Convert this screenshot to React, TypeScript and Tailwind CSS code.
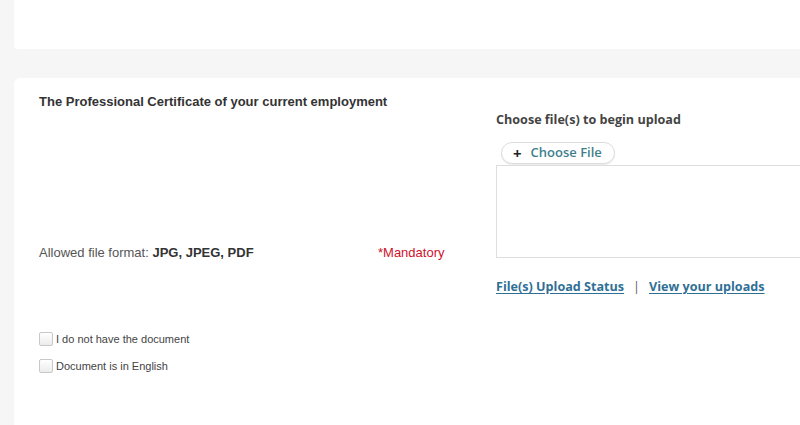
export default function App() {
  return (
    <div className="h-[425px] w-[800px] overflow-hidden bg-[#f6f6f6] pl-[14px] font-['Liberation_Sans',Arial,sans-serif]">
      {/* top card */}
      <div className="h-[49px] rounded-bl-[4px] bg-white" />

      {/* upload card */}
      <div className="mt-[29px] h-[400px] overflow-hidden rounded-tl-[6px] bg-white pl-[25px]">
        <div className="flex">
          <div className="w-[457px] shrink-0">
            <div className="pt-[16px] text-[13px] font-bold leading-[16px] text-[#333]">
              The Professional Certificate of your current employment
            </div>
            <div className="mt-[135px] flex text-[13px] leading-[16px] text-[#555]">
              <div className="w-[339px]">
                Allowed file format: <span className="font-bold text-[#333]">JPG, JPEG, PDF</span>
              </div>
              <div className="text-[#d0112b]">*Mandatory</div>
            </div>
          </div>

          <div className="shrink-0 pt-[34px] font-['Open_Sans',sans-serif]">
            <div className="text-[12.6px] font-bold leading-[16px] text-[#444]">
              Choose file(s) to begin upload
            </div>
            <button className="ml-[5px] mt-[14px] flex h-[22px] items-center gap-[9px] rounded-full border border-[#dcdcdc] bg-white pl-[11px] pr-[12px] text-[13px] font-semibold text-[#3f7f8c] shadow-[0_1px_1px_rgba(0,0,0,0.08)]">
              <span className="text-[15px] font-bold leading-none text-[#222]">+</span>
              Choose File
            </button>
            <div className="mt-[1px] h-[93px] w-[320px] border border-[#dedede] bg-white" />
            <div className="mt-[21px] flex items-center text-[12.6px] font-bold leading-[16px]">
              <a className="text-[#2f6f95] underline underline-offset-2" href="#">File(s) Upload Status</a>
              <span className="mx-[9px] font-normal text-[#555]">|</span>
              <a className="text-[#2f6f95] underline underline-offset-2" href="#">View your uploads</a>
            </div>
          </div>
        </div>

        <div className="mt-[36px] flex flex-col gap-[11px] text-[11px] leading-[16px] text-[#444]">
          <label className="flex items-center">
            <span className="mr-[3px] h-[14px] w-[14px] rounded-[2px] border border-[#c8c8c8] bg-gradient-to-b from-white to-[#ececec]" />
            I do not have the document
          </label>
          <label className="flex items-center">
            <span className="mr-[3px] h-[14px] w-[14px] rounded-[2px] border border-[#c8c8c8] bg-gradient-to-b from-white to-[#ececec]" />
            Document is in English
          </label>
        </div>
      </div>
    </div>
  )
}
